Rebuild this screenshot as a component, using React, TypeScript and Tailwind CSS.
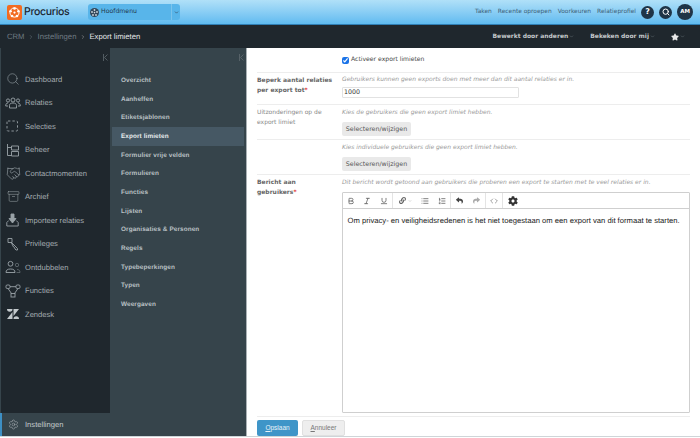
import React from "react";
import { Bold, Italic, Underline, List, ListOrdered, Settings, Search, Archive, ChevronDown, ChevronRight, Handshake, Code } from "lucide-react";
import { FaCog, FaLink, FaReply, FaShare, FaStar } from "react-icons/fa";

const S = ({ children }: { children: React.ReactNode }) => (
  <svg width="16" height="14" viewBox="0 0 16 14" fill="none" stroke="#9aa3a8" strokeWidth="0.9">{children}</svg>
);
const People = () => (
  <S><circle cx="8" cy="4" r="2" /><circle cx="3" cy="4.5" r="1.6" /><circle cx="13" cy="4.5" r="1.6" /><path d="M4.5 12V9.5c0-1.5 1-2.5 3.5-2.5s3.5 1 3.5 2.5V12z" /><path d="M3 10H.7c0-2 .8-3 2.3-3M13 10h2.3c0-2-.8-3-2.3-3" /></S>
);
const Dash = () => <S><rect x="2" y="2" width="10.5" height="10" rx="1" strokeDasharray="2.4 2" /></S>;
const Beheer = () => <S><path d="M2.5 1v11.5h4M2.5 4.5h4" /><path d="M6.5 3h7v4h-7zM6.5 8.5h7v4.5h-7z" /></S>;
const Imp = () => (
  <S><path d="M1.8 13h11.4V9.5l-2-2M1.8 13V9.5l2-2" /><path d="M6 1h3v4.5h2L7.5 10 4 5.5h2z" fill="#9aa3a8" /></S>
);
const Key = () => (
  <S><path d="M3 1.5h4v4H3z" /><path d="M6 5l6.5 6.5v1.5h-1.5l-1-1-.5-1.5-1-.5z" /></S>
);
const Dubbel = () => (
  <S><circle cx="5.5" cy="3.8" r="2.4" /><path d="M1 12.5c0-2.5 1.5-3.5 4.5-3.5s4.5 1 4.5 3.5z" /><circle cx="12" cy="5" r="1.7" strokeOpacity=".5" /><path d="M11.5 12.5h3.5c0-2-1-3-3-3" strokeOpacity=".5" /></S>
);
const Flow = () => (
  <S><rect x="1" y="1" width="4" height="3.5" rx="1.2" /><rect x="11" y="1" width="4" height="3.5" rx="1.2" /><rect x="6" y="9.5" width="4" height="3.5" /><path d="M5 2.7h6M3 4.5l3.5 5M13 4.5l-3.5 5" /></S>
);
const Zen = () => (
  <svg width="16" height="14" viewBox="0 0 16 14" fill="#c3c9cc"><path d="M2 2h5.5a2.75 2.75 0 0 1-5.5 0zM7.5 5v7H2zM8.5 2H14L8.5 9zM8.5 12a2.75 2.75 0 0 1 5.5 0z" /></svg>
);
const Logo = () => (
  <svg width="15" height="15" viewBox="0 0 15 15"><rect width="15" height="15" rx="2" fill="#f26b21" /><circle cx="7.5" cy="7.5" r="4.6" fill="none" stroke="#fff" strokeWidth="1" /><g fill="#fff"><circle cx="7.5" cy="3.5" r="1.3" /><circle cx="11.4" cy="6.2" r="1.3" /><circle cx="10" cy="11" r="1.3" /><circle cx="5" cy="11" r="1.3" /><circle cx="3.6" cy="6.2" r="1.3" /><circle cx="7.5" cy="7.6" r="1.1" /></g></svg>
);
const MenuGlobe = () => (
  <svg width="9" height="9" viewBox="0 0 9 9"><circle cx="4.5" cy="4.5" r="4.5" fill="#33475a" /><g fill="#cfd8de"><circle cx="4.5" cy="2" r=".9" /><circle cx="7" cy="4" r=".9" /><circle cx="6" cy="7" r=".9" /><circle cx="3" cy="7" r=".9" /><circle cx="2" cy="4" r=".9" /><circle cx="4.5" cy="4.6" r=".8" /></g></svg>
);

const ic = { size: 14, strokeWidth: 1, color: "#9aa3a8" };
const mainNav: [string, React.ReactNode][] = [
  ["Dashboard", <Search {...ic} />],
  ["Relaties", <People />],
  ["Selecties", <Dash />],
  ["Beheer", <Beheer />],
  ["Contactmomenten", <Handshake size={15} strokeWidth={1} color="#9aa3a8" />],
  ["Archief", <Archive size={13} strokeWidth={1} color="#9aa3a8" />],
  ["Importeer relaties", <Imp />],
  ["Privileges", <Key />],
  ["Ontdubbelen", <Dubbel />],
  ["Functies", <Flow />],
  ["Zendesk", <Zen />],
];
const subNav = ["Overzicht", "Aanheffen", "Etiketsjablonen", "Export limieten", "Formulier vrije velden", "Formulieren", "Functies", "Lijsten", "Organisaties & Personen", "Regels", "Typebeperkingen", "Typen", "Weergaven"];

const Collapse = () => (
  <svg width="5" height="7" viewBox="0 0 5 7" fill="none" stroke="#5f6a70" strokeWidth="0.8"><path d="M.5 0v7M4.5 .5L1.5 3.5l3 3" /></svg>
);

const SelectBtn = () => (
  <button className="block h-[14px] w-[69px] rounded-[2px] bg-[#e9e9e9] text-[6.3px] leading-[14px] text-[#555]">Selecteren/wijzigen</button>
);

const Tool = ({ children, border, w }: { children: React.ReactNode; border?: boolean; w: string }) => (
  <div className={`flex h-full items-center ${w} ${border ? "border-r border-[#e4e4e4]" : ""}`}>{children}</div>
);
const Cell = ({ children, w = "w-[16.5px]" }: { children: React.ReactNode; w?: string }) => (
  <span className={`flex ${w} items-center justify-center`}>{children}</span>
);

export default function App() {
  const t = { size: 8, color: "#444", strokeWidth: 2 };
  return (
    <div className="flex h-[438px] w-[700px] flex-col overflow-hidden bg-white font-['DejaVu_Sans',sans-serif] antialiased [text-rendering:geometricPrecision]">
      <header className="flex h-[25px] shrink-0 items-center border-b border-[#2f7fb5] bg-gradient-to-b from-[#b0e0f8] to-[#5fbbf0] pl-[7px] pr-[7px]">
        <Logo />
        <span className="ml-[2px] w-[64px] font-['Inter',sans-serif] text-[10.5px] font-medium tracking-[-0.3px] text-[#1a2530]">Procurios</span>
        <div className="flex h-[16px] w-[92px] items-center rounded-[3px] bg-[#58b5ea] pl-[2px] text-[6.2px] text-[#24394a]">
          <MenuGlobe />
          <span className="ml-[2px] flex-1">Hoofdmenu</span>
          <div className="flex h-full w-[9px] items-center justify-center border-l border-[#7cc4ec]"><ChevronDown size={5} color="#33475a" strokeWidth={3} /></div>
        </div>
        <nav className="ml-auto flex items-center gap-[6px] text-[5.9px] text-[#3c5d75]">
          <span>Taken</span><span>Recente oproepen</span><span>Voorkeuren</span><span>Relatieprofiel</span>
        </nav>
        <div className="ml-[5px] flex h-[13px] w-[13px] items-center justify-center rounded-full bg-[#1f3447] text-[8px] font-bold text-white">?</div>
        <div className="ml-[5px] flex h-[13px] w-[13px] items-center justify-center rounded-full bg-[#1f3447]"><Search size={8} color="#fff" strokeWidth={3} /></div>
        <div className="ml-[5px] flex h-[16px] w-[16px] items-center justify-center rounded-full bg-[#1f3447] text-[5.5px] font-bold text-white">AM</div>
      </header>

      <div className="flex h-[23px] shrink-0 items-center bg-[#1f272d] pl-[7px] pr-[15px] font-['Liberation_Sans',sans-serif] text-[7.7px] text-[#6f7b83]">
        <span>CRM</span>
        <ChevronRight size={6} className="mx-[3.5px]" />
        <span>Instellingen</span>
        <ChevronRight size={6} className="mx-[3.5px] text-[#aaa]" />
        <span className="text-[#e2e6e8]">Export limieten</span>
        <div className="ml-auto flex items-center font-['DejaVu_Sans',sans-serif] text-[6px] font-bold text-[#c4c8cb]">
          <span>Bewerkt door anderen</span>
          <ChevronDown size={5} className="ml-[1px] text-[#7d878d]" />
          <span className="ml-[16px]">Bekeken door mij</span>
          <ChevronDown size={5} className="ml-[1px] text-[#7d878d]" />
          <FaStar size={8} color="#e8e8e8" className="ml-[16px]" />
          <ChevronDown size={5} className="ml-[1px] text-[#7d878d]" />
        </div>
      </div>

      <div className="flex min-h-0 flex-1 border-b border-[#cfd5d8]">
        <aside className="flex h-full w-[247px] shrink-0 flex-col border-r border-[#aab1b5] bg-[#36444b]">
          <div className="flex min-h-0 flex-1">
            <div className="ml-px w-[109px] shrink-0 bg-[#1f272d]">
              <div className="flex h-[19.5px] justify-end pr-[2px] pt-[6px]"><Collapse /></div>
              <ul className="font-['Liberation_Sans',sans-serif] text-[7.6px] text-[#a3abb0]">
                {mainNav.map(([label, icon]) => (
                  <li key={label} className="flex h-[23.5px] items-center">
                    <span className="flex w-[24px] justify-center">{icon}</span>
                    <span>{label}</span>
                  </li>
                ))}
              </ul>
            </div>
            <div className="min-w-0 flex-1 px-[2px]">
              <div className="flex h-[23.5px] justify-end pt-[6px]"><Collapse /></div>
              <ul className="font-['Liberation_Sans',sans-serif] text-[6.4px] font-bold tracking-[0.1px] text-[#b9c0c4]">
                {subNav.map((s) => (
                  <li key={s} className={`flex h-[18.67px] items-center pl-[9px] ${s === "Export limieten" ? "bg-[#465864] text-[#e8ecee]" : ""}`}>{s}</li>
                ))}
              </ul>
            </div>
          </div>
          <div className="flex h-[23px] shrink-0 items-center border-l-2 border-[#3d8fc4] font-['Liberation_Sans',sans-serif] text-[7.6px] text-[#c3c9cc]">
            <span className="flex w-[23px] justify-center"><Settings size={11} strokeWidth={1} color="#c3c9cc" /></span>
            <span>Instellingen</span>
          </div>
        </aside>

        <main className="flex min-w-0 flex-1 flex-col pl-[10px] pr-[10px]">
          <div className="flex h-[25px] shrink-0 items-center border-b border-[#ededed] pl-[85px] text-[6.1px] font-medium text-[#444]">
            <input type="checkbox" readOnly checked className="h-[7px] w-[7px] accent-[#1a73e8]" />
            <span className="ml-[2px]">Activeer export limieten</span>
          </div>
          <div className="flex h-[32px] shrink-0 border-b border-[#ededed]">
            <div className="w-[85px] pt-[3px] text-[6px] font-bold leading-[9.5px] text-[#666]">Beperk aantal relaties<br />per export tot<span className="text-[#e03030]">*</span></div>
            <div className="flex-1 pt-[2px]">
              <div className="text-[6px] italic leading-[9px] text-[#999]">Gebruikers kunnen geen exports doen met meer dan dit aantal relaties er in.</div>
              <div className="mt-[3px] h-[11px] w-[177px] rounded-[1px] border border-[#e2e2e2] pl-[1px] text-[6.3px] leading-[9px] text-[#333]">1000</div>
            </div>
          </div>
          <div className="flex h-[35px] shrink-0 border-b border-[#ededed]">
            <div className="w-[85px] pt-[3px] text-[6px] leading-[9.5px] text-[#888]">Uitzonderingen op de<br />export limiet</div>
            <div className="flex-1 pt-[3px]">
              <div className="mb-[5px] text-[6px] italic leading-[9px] text-[#999]">Kies de gebruikers die geen export limiet hebben.</div>
              <SelectBtn />
            </div>
          </div>
          <div className="flex h-[35px] shrink-0 border-b border-[#ededed]">
            <div className="w-[85px]" />
            <div className="flex-1 pt-[3px]">
              <div className="mb-[5px] text-[6px] italic leading-[9px] text-[#999]">Kies individuele gebruikers die geen export limiet hebben.</div>
              <SelectBtn />
            </div>
          </div>
          <div className="flex min-h-0 flex-1 border-b border-[#ededed]">
            <div className="w-[85px] pt-[3px] text-[6px] font-bold leading-[9.5px] text-[#666]">Bericht aan<br />gebruikers<span className="text-[#e03030]">*</span></div>
            <div className="flex min-w-0 flex-1 flex-col pb-[3px] pt-[3px]">
              <div className="mb-[5px] text-[6px] italic leading-[9px] text-[#999]">Dit bericht wordt getoond aan gebruikers die proberen een export te starten met te veel relaties er in.</div>
              <div className="flex min-h-0 flex-1 flex-col rounded-[1px] border border-[#cfcfcf]">
                <div className="flex h-[16px] shrink-0 items-center border-b border-[#cfcfcf]">
                  <Tool border w="w-[50px]"><Cell><Bold {...t} /></Cell><Cell><Italic {...t} /></Cell><Cell><Underline {...t} /></Cell></Tool>
                  <Tool border w="w-[58px]"><Cell w="w-[24px]"><FaLink size={7} color="#666" /><ChevronDown size={4} color="#999" className="ml-[2px]" /></Cell><Cell><List {...t} /></Cell><Cell><ListOrdered {...t} /></Cell></Tool>
                  <Tool border w="w-[35px]"><Cell w="w-[17.5px]"><FaReply size={7} color="#444" /></Cell><Cell w="w-[17.5px]"><FaShare size={7} color="#aaa" /></Cell></Tool>
                  <Tool border w="w-[17px]"><Cell w="w-full"><Code size={8} color="#444" strokeWidth={1.5} /></Cell></Tool>
                  <Tool w="w-[20px]"><Cell w="w-full"><FaCog size={10} color="#333" /></Cell></Tool>
                </div>
                <div className="px-[4.5px] pt-[7px] font-['Liberation_Sans',sans-serif] text-[7.65px] leading-[10px] text-[#222]">Om privacy- en veiligheidsredenen is het niet toegestaan om een export van dit formaat te starten.</div>
              </div>
            </div>
          </div>
          <div className="flex h-[19px] shrink-0 items-start gap-[4px] pt-[3px] font-['Liberation_Sans',sans-serif] text-[6.5px]">
            <button className="h-[16px] w-[41px] rounded-[2px] bg-[#3f95c8] text-[#e8f3f9]"><span className="underline">O</span>pslaan</button>
            <button className="h-[16px] w-[43px] rounded-[2px] border border-[#e0e0e0] bg-[#eee] text-[#777]"><span className="underline">A</span>nnuleer</button>
          </div>
        </main>
      </div>
      <div className="h-px shrink-0 bg-white" />
    </div>
  );
}
